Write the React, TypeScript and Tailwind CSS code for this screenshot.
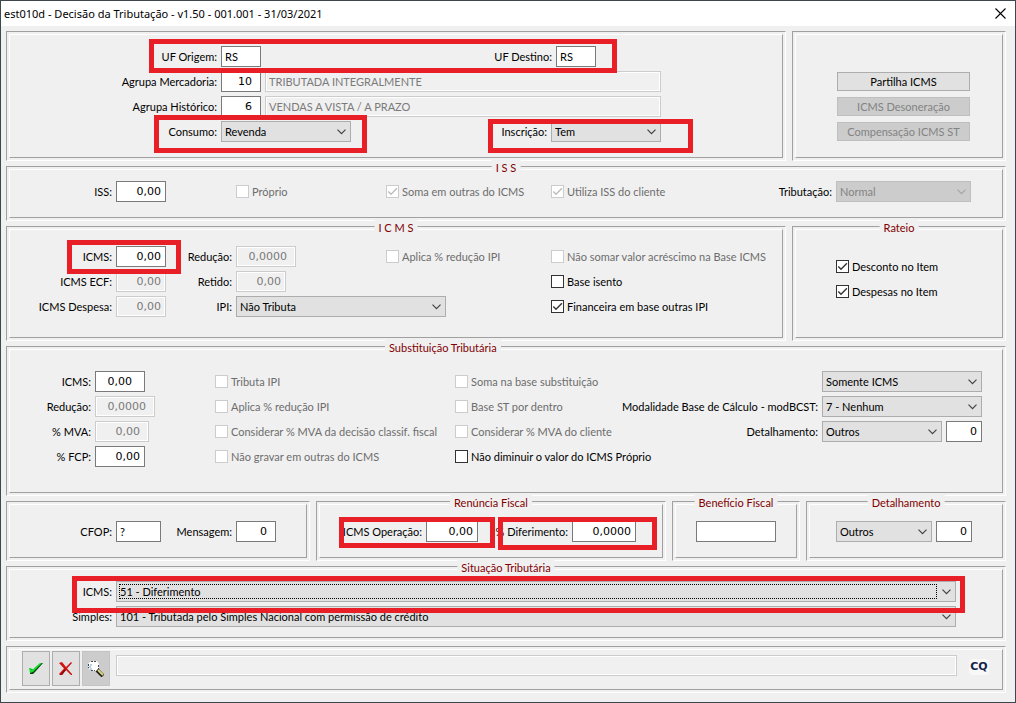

import type { ReactNode } from "react";
import clsx from "clsx";

/**
 * Painel com moldura dupla e título opcional sobre a borda.
 */
function Panel({
  title,
  titleClass = "left-1/2 -translate-x-1/2",
  className,
  marks,
  children,
}: {
  title?: string;
  titleClass?: string;
  className?: string;
  marks?: ReactNode;
  children: ReactNode;
}) {
  return (
    <fieldset className="relative min-w-0 border border-t-[#a0a0a0] border-r-white border-b-white border-l-[#a0a0a0] p-[2px]">
      {title && (
        <legend
          className={clsx(
            "absolute -top-[7px] bg-[#f0f0f0] px-1 leading-4 whitespace-pre text-[#800000]",
            titleClass
          )}
        >
          {title}
        </legend>
      )}
      <div
        className={clsx(
          "h-full border border-t-white border-r-[#a0a0a0] border-b-[#a0a0a0] border-l-white",
          className
        )}
      >
        {children}
      </div>
      {marks}
    </fieldset>
  );
}

/** Retângulo vermelho de destaque. */
function Mark({ className }: { className: string }) {
  return (
    <span
      aria-hidden="true"
      className={clsx(
        "pointer-events-none absolute border-5 border-[#e81f26]",
        className
      )}
    />
  );
}

function Row({ className, children }: { className?: string; children: ReactNode }) {
  return <div className={clsx("flex h-[21px] items-center gap-1", className)}>{children}</div>;
}

function Label({
  htmlFor,
  className,
  children,
}: {
  htmlFor: string;
  className?: string;
  children: ReactNode;
}) {
  return (
    <label
      htmlFor={htmlFor}
      className={clsx("shrink-0 text-right leading-4 whitespace-nowrap", className)}
    >
      {children}
    </label>
  );
}

/** Campo de texto; numeric alinha à direita com a fonte de números. */
function TextField({
  id,
  value = "",
  numeric,
  disabled,
  label,
  className,
}: {
  id: string;
  value?: string;
  numeric?: boolean;
  disabled?: boolean;
  label?: string;
  className: string;
}) {
  return (
    <input
      id={id}
      type="text"
      aria-label={label}
      defaultValue={value}
      disabled={disabled}
      className={clsx(
        "h-[21px] border outline-none",
        numeric ? "text-right font-['DejaVu_Sans',sans-serif] text-[11px]" : "pl-[3px]",
        disabled
          ? "border-[#cccccc] bg-[#f0f0f0] text-[#7a7a7a] shadow-[inset_0_0_0_1px_white]"
          : "border-[#7a7a7a] bg-white text-black",
        className
      )}
    />
  );
}

function Select({
  id,
  value,
  disabled,
  focused,
  label,
  className,
}: {
  id: string;
  value: string;
  disabled?: boolean;
  focused?: boolean;
  label?: string;
  className: string;
}) {
  return (
    <span className={clsx("relative flex h-[21px]", className)}>
      <select
        id={id}
        aria-label={label}
        disabled={disabled}
        className={clsx(
          "w-full appearance-none border pr-5 pl-[3px] leading-4 outline-none",
          disabled
            ? "border-[#bfbfbf] bg-[#cccccc] text-[#838383] opacity-100"
            : "border-[#adadad] bg-[#e1e1e1] text-black"
        )}
      >
        <option>{value}</option>
      </select>
      {focused && (
        <span className="pointer-events-none absolute inset-y-[3px] right-[19px] left-[3px] border border-dotted border-black" />
      )}
      <svg
        viewBox="0 0 9 6"
        aria-hidden="true"
        className={clsx(
          "pointer-events-none absolute top-2 right-[5px] h-[6px] w-[9px]",
          disabled ? "text-[#a5a5a5]" : "text-[#444444]"
        )}
      >
        <path d="M0.5 0.7 4.5 4.7 8.5 0.7" fill="none" stroke="currentColor" strokeWidth="1.2" />
      </svg>
    </span>
  );
}

function Check({
  id,
  checked,
  disabled,
  className,
  children,
}: {
  id: string;
  checked?: boolean;
  disabled?: boolean;
  className?: string;
  children: ReactNode;
}) {
  return (
    <span className={clsx("flex h-[21px] shrink-0 items-center gap-[3px]", className)}>
      <span className="relative flex">
        <input
          id={id}
          type="checkbox"
          defaultChecked={checked}
          disabled={disabled}
          className={clsx(
            "peer size-[13px] appearance-none border bg-white",
            disabled ? "border-[#cccccc]" : "border-[#333333]"
          )}
        />
        <svg
          viewBox="0 0 13 13"
          aria-hidden="true"
          className={clsx(
            "pointer-events-none absolute inset-0 hidden size-[13px] peer-checked:block",
            disabled ? "text-[#bdbdbd]" : "text-[#333333]"
          )}
        >
          <path d="M2.3 6.5 5 9.2 10.9 3.3" fill="none" stroke="currentColor" strokeWidth="1.4" />
        </svg>
      </span>
      <label
        htmlFor={id}
        className={clsx("leading-4 whitespace-nowrap", disabled && "text-[#6d6d6d]")}
      >
        {children}
      </label>
    </span>
  );
}

function SideButton({ disabled, children }: { disabled?: boolean; children: ReactNode }) {
  return (
    <button
      type="button"
      disabled={disabled}
      className={clsx(
        "h-[19px] w-[133px] border leading-4 whitespace-nowrap",
        disabled
          ? "border-[#bfbfbf] bg-[#cccccc] text-[#838383]"
          : "border-[#adadad] bg-[#e1e1e1] text-black"
      )}
    >
      {children}
    </button>
  );
}

function ToolButton({
  label,
  disabled,
  children,
}: {
  label: string;
  disabled?: boolean;
  children: ReactNode;
}) {
  return (
    <button
      type="button"
      aria-label={label}
      disabled={disabled}
      className={clsx(
        "flex h-[35px] w-7 items-center justify-center border",
        disabled ? "border-[#c4c4c4] bg-[#cccccc]" : "border-[#adadad] bg-[#e1e1e1]"
      )}
    >
      {children}
    </button>
  );
}

function OkIcon() {
  return (
    <svg viewBox="0 0 16 16" className="size-4" aria-hidden="true">
      <path d="M2 8 4 8 5 9 13 2 15 2 7 11 5 13 2 13Z" fill="#063a0a" />
      <path d="M1 7 3 7 4 9 12 2 14 2 5 11 2 12Z" fill="#12e02c" />
    </svg>
  );
}

function CancelIcon() {
  return (
    <svg viewBox="0 0 16 16" className="size-4" aria-hidden="true">
      <path
        d="M1 2 4 1 8 6 13 1 14 2 9 7.500 14 13 14 14 13 14 8 9 4 14 2 14 1 13 6 7.500Z"
        fill="#d01212"
      />
      <path d="M2 14 7 8 8 9 4 14Z" fill="#8d0a0a" />
    </svg>
  );
}

function SearchIcon() {
  return (
    <svg viewBox="0 0 16 16" className="size-4" aria-hidden="true">
      <path d="M3 0H9L11 3V7L9 10H4L1 8 0 3Z" fill="#ffffff" />
      <path
        d="M3 0.5H8M0.500 3V7M3 9.500H7M10.500 4V8"
        fill="none"
        stroke="#444f58"
        strokeDasharray="2 1"
      />
      <path d="M2 4H4M1 6H3M2 8H4" stroke="#6fa7d3" />
      <path d="M9 9 15 15" stroke="#222222" strokeWidth="4" />
      <path d="M10 9 15 14" stroke="#dcd675" strokeWidth="2" />
    </svg>
  );
}

export default function App() {
  return (
    <div className="flex min-h-screen flex-col border border-[#3d474d] bg-[#f0f0f0] font-['Lato',sans-serif] text-[11px] text-black">
      <header className="flex h-[25px] items-center justify-between bg-white pr-[9px] pl-[3px]">
        <h1 className="font-['Noto_Sans',sans-serif] text-[11px] leading-4">
          est010d - Decisão da Tributação - v1.50 - 001.001 - 31/03/2021
        </h1>
        <button type="button" aria-label="Fechar">
          <svg viewBox="0 0 11 11" className="size-[11px]" aria-hidden="true">
            <path d="M0.5 0.5 10.5 10.5M10.5 0.5 0.5 10.5" stroke="#000000" strokeWidth="1.1" />
          </svg>
        </button>
      </header>

      <main className="flex flex-col gap-[5px] pt-[5px] pr-[9px] pb-[9px] pl-[5px]">
        {/* Origem, destino e agrupamentos */}
        <div className="grid grid-cols-[780fr_214fr] gap-x-[6px]">
          <Panel
            className="flex flex-col gap-1 pt-[11px] pb-[15px]"
            marks={
              <>
                <Mark className="top-[7px] left-[142px] h-[34px] w-[468px]" />
                <Mark className="top-[83px] left-[147px] h-[38px] w-[213px]" />
                <Mark className="top-[87px] left-[481px] h-[34px] w-[205px]" />
              </>
            }
          >
            <Row>
              <Label htmlFor="uf-origem" className="w-[207px]">UF Origem:</Label>
              <TextField id="uf-origem" value="RS" className="w-10" />
              <Label htmlFor="uf-destino" className="w-[287px]">UF Destino:</Label>
              <TextField id="uf-destino" value="RS" className="w-10" />
            </Row>
            <Row>
              <Label htmlFor="mercadoria" className="w-[207px]">Agrupa Mercadoria:</Label>
              <TextField id="mercadoria" value="10" numeric className="w-10 pr-2" />
              <TextField
                id="mercadoria-nome"
                label="Descrição da mercadoria"
                value="TRIBUTADA INTEGRALMENTE"
                disabled
                className="w-[396px]"
              />
            </Row>
            <Row>
              <Label htmlFor="historico" className="w-[207px]">Agrupa Histórico:</Label>
              <TextField id="historico" value="6" numeric className="w-10 pr-2" />
              <TextField
                id="historico-nome"
                label="Descrição do histórico"
                value="VENDAS A VISTA / A PRAZO"
                disabled
                className="w-[396px]"
              />
            </Row>
            <Row>
              <Label htmlFor="consumo" className="w-[207px]">Consumo:</Label>
              <Select id="consumo" value="Revenda" className="w-[130px]" />
              <Label htmlFor="inscricao" className="w-[192px]">Inscrição:</Label>
              <Select id="inscricao" value="Tem" className="w-[110px]" />
            </Row>
          </Panel>

          <Panel className="flex flex-col gap-[6px] pt-[37px] pl-[41px]">
            <SideButton>Partilha ICMS</SideButton>
            <SideButton disabled>ICMS Desoneração</SideButton>
            <SideButton disabled>Compensação ICMS ST</SideButton>
          </Panel>
        </div>

        <Panel title="I S S" className="pt-[11px] pb-[15px]">
          <Row className="pr-[31px]">
            <Label htmlFor="iss" className="w-[102px]">ISS:</Label>
            <TextField id="iss" value="0,00" numeric className="w-[50px] pr-1" />
            <Check id="proprio" disabled className="ml-[66px] w-[146px]">Próprio</Check>
            <Check id="soma-outras" checked disabled className="w-[161px]">
              Soma em outras do ICMS
            </Check>
            <Check id="iss-cliente" checked disabled>Utiliza ISS do cliente</Check>
            <Label htmlFor="tributacao" className="ml-auto">Tributação:</Label>
            <Select id="tributacao" value="Normal" disabled className="w-[135px]" />
          </Row>
        </Panel>

        <div className="grid grid-cols-[780fr_214fr] gap-x-[6px]">
          <Panel
            title="I C M S"
            className="flex pt-4 pb-5"
            marks={<Mark className="top-[13px] left-[60px] h-[34px] w-[114px]" />}
          >
            <div className="flex w-[541px] shrink-0 flex-col gap-1">
              <Row>
                <Label htmlFor="icms" className="w-[102px]">ICMS:</Label>
                <TextField id="icms" value="0,00" numeric className="w-[50px] pr-1" />
                <Label htmlFor="icms-reducao" className="w-[62px]">Redução:</Label>
                <TextField id="icms-reducao" value="0,0000" numeric disabled className="w-[60px] pr-2" />
                <Check id="aplica-reducao" disabled className="ml-[86px]">
                  Aplica % redução IPI
                </Check>
              </Row>
              <Row>
                <Label htmlFor="icms-ecf" className="w-[102px]">ICMS ECF:</Label>
                <TextField id="icms-ecf" value="0,00" numeric disabled className="w-[50px] pr-1" />
                <Label htmlFor="retido" className="w-[62px]">Retido:</Label>
                <TextField id="retido" value="0,00" numeric disabled className="w-[50px] pr-1" />
              </Row>
              <Row>
                <Label htmlFor="icms-despesa" className="w-[102px]">ICMS Despesa:</Label>
                <TextField id="icms-despesa" value="0,00" numeric disabled className="w-[50px] pr-1" />
                <Label htmlFor="ipi" className="w-[62px]">IPI:</Label>
                <Select id="ipi" value="Não Tributa" className="w-[210px]" />
              </Row>
            </div>
            <div className="flex flex-col gap-1">
              <Check id="nao-somar" disabled>Não somar valor acréscimo na Base ICMS</Check>
              <Check id="base-isento">Base isento</Check>
              <Check id="financeira" checked>Financeira em base outras IPI</Check>
            </div>
          </Panel>

          <Panel title="Rateio" className="flex flex-col gap-1 pt-[26px] pl-[40px]">
            <Check id="desconto" checked>Desconto no Item</Check>
            <Check id="despesas" checked>Despesas no Item</Check>
          </Panel>
        </div>

        <Panel
          title="Substituição Tributária"
          titleClass="left-[378px]"
          className="flex pt-[21px] pr-5 pb-[25px]"
        >
          <div className="flex w-[205px] shrink-0 flex-col gap-1">
            <Row>
              <Label htmlFor="st-icms" className="w-[81px]">ICMS:</Label>
              <TextField id="st-icms" value="0,00" numeric className="w-[50px] pr-3" />
            </Row>
            <Row>
              <Label htmlFor="st-reducao" className="w-[81px]">Redução:</Label>
              <TextField id="st-reducao" value="0,0000" numeric disabled className="w-[60px] pr-2" />
            </Row>
            <Row>
              <Label htmlFor="st-mva" className="w-[81px]">% MVA:</Label>
              <TextField id="st-mva" value="0,00" numeric disabled className="w-[54px] pr-2" />
            </Row>
            <Row>
              <Label htmlFor="st-fcp" className="w-[81px]">% FCP:</Label>
              <TextField id="st-fcp" value="0,00" numeric className="w-[50px] pr-1" />
            </Row>
          </div>
          <div className="flex w-[240px] shrink-0 flex-col gap-1">
            <Check id="tributa-ipi" disabled>Tributa IPI</Check>
            <Check id="st-aplica-reducao" disabled>Aplica % redução IPI</Check>
            <Check id="mva-decisao" disabled>Considerar % MVA da decisão classif. fiscal</Check>
            <Check id="nao-gravar" disabled>Não gravar em outras do ICMS</Check>
          </div>
          <div className="flex w-40 shrink-0 flex-col gap-1">
            <Check id="soma-base" disabled>Soma na base substituição</Check>
            <Check id="st-dentro" disabled>Base ST por dentro</Check>
            <Check id="mva-cliente" disabled>Considerar % MVA do cliente</Check>
            <Check id="nao-diminuir">Não diminuir o valor do ICMS Próprio</Check>
          </div>
          <div className="ml-auto flex flex-col items-end gap-1">
            <Select id="st-tipo" label="Tipo" value="Somente ICMS" className="w-[160px]" />
            <Row>
              <Label htmlFor="modbcst">Modalidade Base de Cálculo - modBCST:</Label>
              <Select id="modbcst" value="7 - Nenhum" className="w-[160px]" />
            </Row>
            <Row>
              <Label htmlFor="st-detalhe">Detalhamento:</Label>
              <Select id="st-detalhe" value="Outros" className="w-[120px]" />
              <TextField id="st-detalhe-cod" label="Código" value="0" numeric className="w-9 pr-1" />
            </Row>
          </div>
        </Panel>

        <div className="grid grid-cols-[304fr_350fr_128fr_200fr] gap-x-[6px]">
          <Panel className="pt-4 pb-[15px]">
            <Row>
              <Label htmlFor="cfop" className="w-[102px]">CFOP:</Label>
              <TextField id="cfop" value="?" className="w-[45px]" />
              <Label htmlFor="mensagem" className="w-[67px]">Mensagem:</Label>
              <TextField id="mensagem" value="0" numeric className="w-10 pr-2" />
            </Row>
          </Panel>
          <Panel
            title="Renúncia Fiscal"
            className="pt-4"
            marks={
              <>
                <Mark className="top-[15px] left-[22px] h-[31px] w-[156px]" />
                <Mark className="top-[15px] left-[181px] h-[33px] w-[159px]" />
              </>
            }
          >
            <Row>
              <Label htmlFor="icms-operacao" className="w-[102px]">ICMS Operação:</Label>
              <TextField id="icms-operacao" value="0,00" numeric className="w-[52px] pr-1" />
              <Label htmlFor="diferimento" className="w-[86px]">% Diferimento:</Label>
              <TextField id="diferimento" value="0,0000" numeric className="w-16 pr-1" />
            </Row>
          </Panel>
          <Panel title="Benefício Fiscal" className="pt-4 pl-5">
            <TextField id="beneficio" label="Benefício Fiscal" className="block w-20" />
          </Panel>
          <Panel title="Detalhamento" className="pt-4 pl-[26px]">
            <Row>
              <Select id="detalhe" label="Detalhamento" value="Outros" className="w-24" />
              <TextField id="detalhe-cod" label="Código" value="0" numeric className="w-9 pr-1" />
            </Row>
          </Panel>
        </div>

        <Panel
          title="Situação Tributária"
          className="flex flex-col gap-1 pt-[11px] pr-[46px] pb-[10px]"
          marks={<Mark className="top-[9px] right-[40px] left-[65px] h-[37px]" />}
        >
          <Row>
            <Label htmlFor="sit-icms" className="w-[102px]">ICMS:</Label>
            <Select id="sit-icms" value="51 - Diferimento" focused className="flex-1" />
          </Row>
          <Row>
            <Label htmlFor="sit-simples" className="w-[102px]">Simples:</Label>
            <Select
              id="sit-simples"
              value="101 - Tributada pelo Simples Nacional com permissão de crédito"
              className="flex-1"
            />
          </Row>
        </Panel>

        {/* Barra de ações */}
        <Panel className="flex items-start gap-[2px] pt-px pr-[13px] pb-[3px] pl-3">
          <ToolButton label="Confirmar"><OkIcon /></ToolButton>
          <ToolButton label="Cancelar"><CancelIcon /></ToolButton>
          <ToolButton label="Pesquisar" disabled><SearchIcon /></ToolButton>
          <TextField
            id="status"
            label="Mensagem do sistema"
            disabled
            className="mt-1 mr-[10px] ml-1 flex-1"
          />
          <span className="mt-2 w-5 rounded-sm bg-[#f8f8f8] text-center font-['DejaVu_Sans',sans-serif] text-[11px] leading-4 font-bold text-[#14254a]">
            CQ
          </span>
        </Panel>
      </main>
    </div>
  );
}
